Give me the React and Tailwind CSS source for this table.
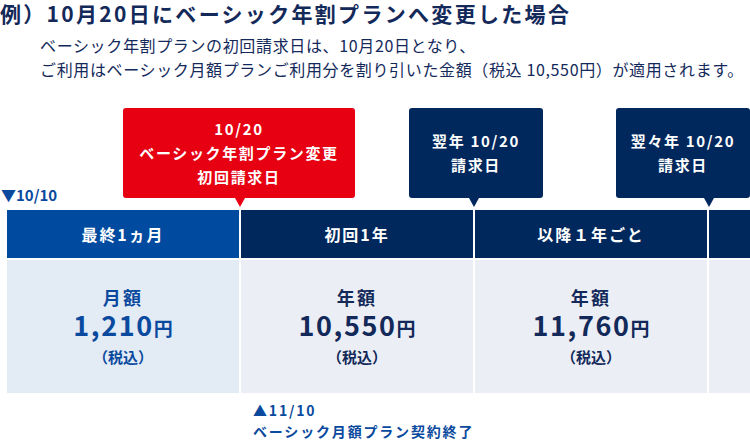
import React from 'react';

const font = { fontFamily: '"Noto Sans CJK JP", "Noto Sans", sans-serif' };

const Callout = ({ lines, color, width, arrowLeft, className = '' }) => (
  <div className={`flex flex-col shrink-0 ${className}`} style={{ width }}>
    <div
      className={`h-[90px] rounded-[3px] flex flex-col items-center justify-center text-white font-bold text-[15px] leading-[24px] tracking-[0.11em] ${color}`}
    >
      {lines.map((l) => (
        <div key={l}>{l}</div>
      ))}
    </div>
    <div
      className={`w-0 h-0 border-l-[5px] border-r-[5px] border-t-[9px] border-l-transparent border-r-transparent ${
        color === 'bg-[#e60012]' ? 'border-t-[#e60012]' : 'border-t-[#00285c]'
      }`}
      style={{ marginLeft: arrowLeft - 5 }}
    />
  </div>
);

const Price = ({ label, amount, accent }) => (
  <div className={`flex flex-col items-center justify-center h-full font-bold ${accent}`}>
    <div className="text-[18px] leading-[24px] tracking-[0.12em]">{label}</div>
    <div className="leading-[32px] whitespace-nowrap">
      <span className="text-[27px] tracking-[0.06em]">{amount}</span>
      <span className="text-[19px]">円</span>
    </div>
    <div className="text-[15px] leading-[24px]">（税込）</div>
  </div>
);

export default function App() {
  return (
    <div className="w-[750px] h-[442px] overflow-hidden bg-white text-[#13295a]" style={font}>
      <h1 className="pt-[1px] text-[21px] font-bold leading-[25px] tracking-[0.11em] whitespace-nowrap">
        例）10月20日にベーシック年割プランへ変更した場合
      </h1>

      <div className="mt-[7px] pl-[40px] text-[16px] leading-[24px] tracking-[0.04em] whitespace-nowrap">
        <p>ベーシック年割プランの初回請求日は、10月20日となり、</p>
        <p>ご利用はベーシック月額プランご利用分を割り引いた金額（税込 10,550円）が適用されます。</p>
      </div>

      {/* callouts */}
      <div className="mt-[27px] flex items-end">
        <div className="w-[123px] shrink-0 self-end mb-[4px] pl-[1px] text-[15px] leading-[16px] font-bold text-[#0a4a9e]">
          ▼10/10
        </div>
        <Callout
          lines={['10/20', 'ベーシック年割プラン変更', '初回請求日']}
          color="bg-[#e60012]"
          width={232}
          arrowLeft={117}
        />
        <Callout
          lines={['翌年 10/20', '請求日']}
          color="bg-[#00285c]"
          width={134}
          arrowLeft={65}
          className="ml-[54px]"
        />
        <Callout
          lines={['翌々年 10/20', '請求日']}
          color="bg-[#00285c]"
          width={134}
          arrowLeft={93}
          className="ml-[73px]"
        />
      </div>

      {/* header row */}
      <div className="mt-[3px] pl-[7px] flex gap-[2px] text-white text-[16px] font-bold tracking-[0.12em]">
        <div className="w-[232px] shrink-0 h-[48px] bg-[#004a9f] flex items-center justify-center">最終1ヵ月</div>
        <div className="w-[232px] shrink-0 h-[48px] bg-[#00285c] flex items-center justify-center">初回1年</div>
        <div className="w-[232px] shrink-0 h-[48px] bg-[#00285c] flex items-center justify-center">以降１年ごと</div>
        <div className="w-[232px] shrink-0 h-[48px] bg-[#00285c]" />
      </div>

      {/* body row */}
      <div className="mt-[2px] pl-[7px] flex gap-[2px]">
        <div className="w-[232px] shrink-0 h-[133px] bg-[#e3ebf5]">
          <Price label="月額" amount="1,210" accent="text-[#0a4a9e]" />
        </div>
        <div className="w-[232px] shrink-0 h-[133px] bg-[#ebeff5]">
          <Price label="年額" amount="10,550" accent="text-[#13295a]" />
        </div>
        <div className="w-[232px] shrink-0 h-[133px] bg-[#ebeff5]">
          <Price label="年額" amount="11,760" accent="text-[#13295a]" />
        </div>
        <div className="w-[232px] shrink-0 h-[133px] bg-[#ebeff5]" />
      </div>

      <div className="mt-[7px] pl-[253px] text-[14px] leading-[21px] font-bold text-[#0a4a9e] tracking-[0.13em] whitespace-nowrap">
        <div>▲11/10</div>
        <div>ベーシック月額プラン契約終了</div>
      </div>
    </div>
  );
}
